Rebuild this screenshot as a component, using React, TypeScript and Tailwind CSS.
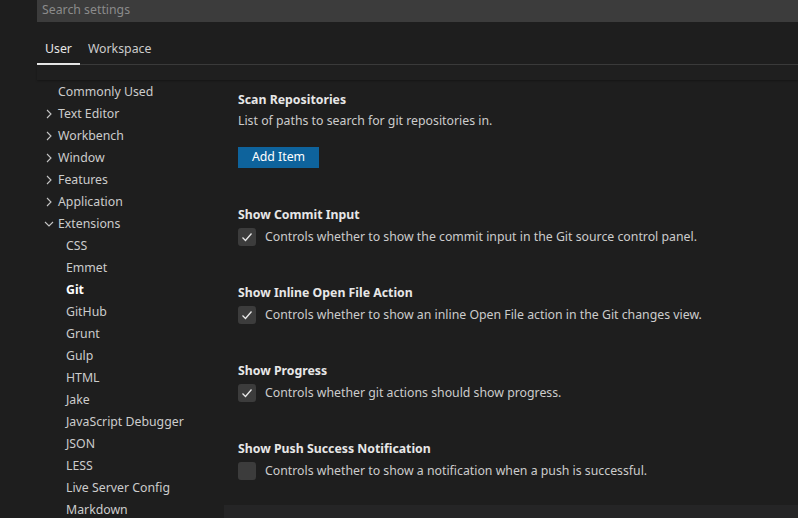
import React from "react";

type NavItem = { label: string; level: 0 | 1; chevron?: "right" | "down"; bold?: boolean };

const navItems: NavItem[] = [
  { label: "Commonly Used", level: 0 },
  { label: "Text Editor", level: 0, chevron: "right" },
  { label: "Workbench", level: 0, chevron: "right" },
  { label: "Window", level: 0, chevron: "right" },
  { label: "Features", level: 0, chevron: "right" },
  { label: "Application", level: 0, chevron: "right" },
  { label: "Extensions", level: 0, chevron: "down" },
  { label: "CSS", level: 1 },
  { label: "Emmet", level: 1 },
  { label: "Git", level: 1, bold: true },
  { label: "GitHub", level: 1 },
  { label: "Grunt", level: 1 },
  { label: "Gulp", level: 1 },
  { label: "HTML", level: 1 },
  { label: "Jake", level: 1 },
  { label: "JavaScript Debugger", level: 1 },
  { label: "JSON", level: 1 },
  { label: "LESS", level: 1 },
  { label: "Live Server Config", level: 1 },
  { label: "Markdown", level: 1 },
];

const checkSettings = [
  { title: "Show Commit Input", desc: "Controls whether to show the commit input in the Git source control panel.", checked: true },
  { title: "Show Inline Open File Action", desc: "Controls whether to show an inline Open File action in the Git changes view.", checked: true },
  { title: "Show Progress", desc: "Controls whether git actions should show progress.", checked: true },
  { title: "Show Push Success Notification", desc: "Controls whether to show a notification when a push is successful.", checked: false },
];

function Chevron({ dir }: { dir: "right" | "down" }) {
  return (
    <svg width="10" height="10" viewBox="0 0 10 10" className="shrink-0">
      {dir === "right" ? (
        <polyline points="3,1 7,5 3,9" fill="none" stroke="#c5c5c5" strokeWidth="1.1" />
      ) : (
        <polyline points="1,3 5,7 9,3" fill="none" stroke="#c5c5c5" strokeWidth="1.1" />
      )}
    </svg>
  );
}

function Checkbox({ checked }: { checked: boolean }) {
  return (
    <div className="w-[18px] h-[18px] rounded-[3px] bg-[#3c3c3c] flex items-center justify-center shrink-0">
      {checked && (
        <svg width="14" height="14" viewBox="0 0 14 14">
          <polyline points="2.5,7.5 5.5,10.5 11.5,3.5" fill="none" stroke="#e8e8e8" strokeWidth="1.3" />
        </svg>
      )}
    </div>
  );
}

export default function App() {
  return (
    <div className="w-[798px] h-[518px] overflow-hidden bg-[#1e1e1e] pl-[37px] flex flex-col font-['Noto_Sans',sans-serif] text-[12.3px] text-[#cccccc]">
      {/* search */}
      <div className="h-[22px] bg-[#3c3c3c] pl-[5px] pb-[2px] flex items-center text-[#8b8b8b] leading-[18px] shrink-0">
        Search settings
      </div>

      {/* tabs */}
      <div className="h-[43px] flex items-end border-b border-[#3c3c3c] shrink-0">
        <div className="px-2 h-[31px] pt-[2px] flex items-center text-[#e7e7e7] border-b-2 border-[#e7e7e7] -mb-px">User</div>
        <div className="px-2 h-[31px] pt-[2px] flex items-center text-[#cccccc]">Workspace</div>
      </div>
      <div className="h-[15px] bg-[#1f1f1f] shadow-[0_1px_2px_rgba(0,0,0,0.3)] shrink-0" />

      <div className="flex flex-1 min-h-0">
        {/* nav */}
        <div className="w-[187px] shrink-0 pt-px">
          {navItems.map((item) => (
            <div key={item.label} className="h-[22px] flex items-center leading-[22px]">
              {item.level === 0 ? (
                <div className="flex items-center pl-[7px] gap-[4px]">
                  <div className="w-[10px] flex items-center">{item.chevron && <Chevron dir={item.chevron} />}</div>
                  <span>{item.label}</span>
                </div>
              ) : (
                <span className={"pl-[29px] " + (item.bold ? "font-bold text-white" : "")}>{item.label}</span>
              )}
            </div>
          ))}
        </div>

        {/* settings list */}
        <div className="flex-1 flex flex-col">
          <div className="pl-[14px] pt-[11px] flex flex-col">
            <div className="font-bold text-[#e7e7e7] leading-[18px]">Scan Repositories</div>
            <div className="leading-[18px] mt-[3px]">List of paths to search for git repositories in.</div>
            <div className="mt-[17px] h-[21px] w-[81px] bg-[#0e639c] text-white flex items-center justify-center">Add Item</div>
          </div>
          {checkSettings.map((s) => (
            <div key={s.title} className="pl-[14px] mt-[38px] flex flex-col">
              <div className="font-bold text-[#e7e7e7] leading-[18px]">{s.title}</div>
              <div className="mt-[4px] flex items-center gap-[9px] leading-[18px]">
                <Checkbox checked={s.checked} />
                <span>{s.desc}</span>
              </div>
            </div>
          ))}
          <div className="mt-[25px] flex-1 bg-[#252526]" />
        </div>
      </div>
    </div>
  );
}
